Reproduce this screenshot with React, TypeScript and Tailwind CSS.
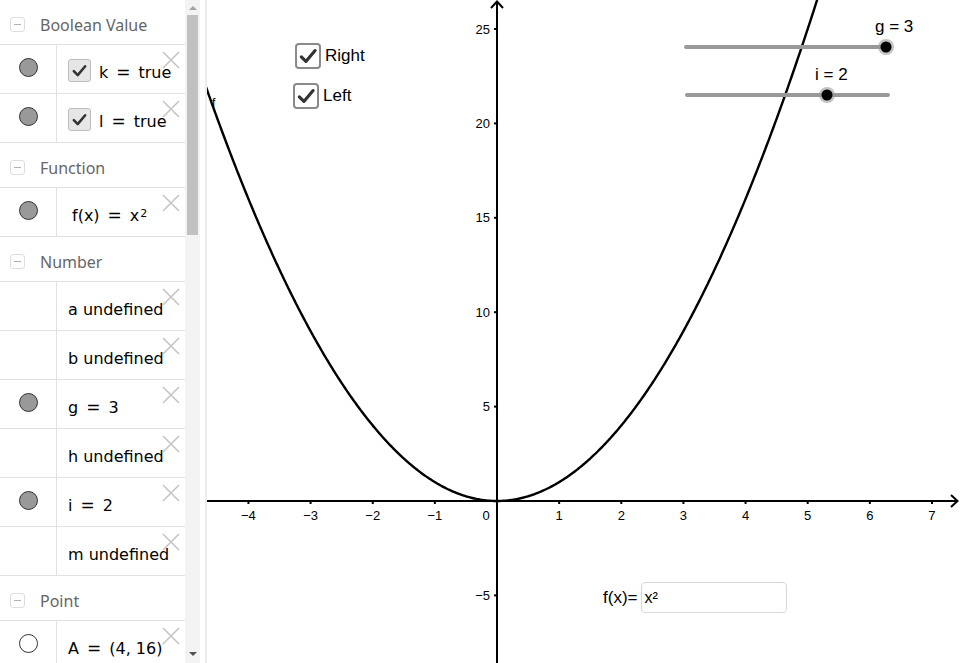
import React from "react";

const OX = 497;
const OY = 501;
const SX = 62.14;
const SY = 18.88;

function buildCurve() {
  const parts: string[] = [];
  for (let i = 0; i <= 600; i++) {
    const x = -4.72 + (i * (5.25 + 4.72)) / 600;
    const px = OX + x * SX;
    const py = OY - x * x * SY;
    parts.push(`${i === 0 ? "M" : "L"}${px.toFixed(2)} ${py.toFixed(2)}`);
  }
  return parts.join(" ");
}
const curve = buildCurve();

function Minus() {
  return (
    <div className="w-[15px] h-[15px] rounded-[3px] border border-[#dedede] flex items-center justify-center shrink-0">
      <div className="w-[7px] h-px bg-[#b0b0b0]" />
    </div>
  );
}

function Header({ title }: { title: string }) {
  return (
    <div className="h-[45px] flex items-center pl-[10px] pt-[5px] border-b border-[#e2e2e2] shrink-0">
      <Minus />
      <span className="ml-[15px] text-[16px] text-[#666] font-['Noto_Sans',sans-serif]">{title}</span>
    </div>
  );
}

function XIcon() {
  return (
    <svg width="18" height="18" viewBox="0 0 18 18" className="absolute right-[5px] top-[6px]">
      <path d="M1 1 L17 17 M17 1 L1 17" stroke="#c4c4c4" strokeWidth="1.6" fill="none" />
    </svg>
  );
}

function Marble({ filled = true }: { filled?: boolean }) {
  return (
    <div
      className={`w-[19px] h-[19px] rounded-full border border-[#333] ${filled ? "bg-[#999]" : "bg-white"}`}
    />
  );
}

function Row({
  marble,
  children,
}: {
  marble?: "filled" | "empty";
  children: React.ReactNode;
}) {
  return (
    <div className="h-[49px] flex border-b border-[#e2e2e2] shrink-0">
      <div className="w-[57px] border-r border-[#e2e2e2] flex items-center justify-center pb-[3px]">
        {marble === "filled" && <Marble />}
        {marble === "empty" && <Marble filled={false} />}
      </div>
      <div className="relative flex-1 flex items-center pl-[11px] pt-[8px] overflow-hidden whitespace-nowrap text-[16px] text-black font-['DejaVu_Sans',sans-serif]">
        {children}
        <XIcon />
      </div>
    </div>
  );
}

function Eq({ l, r }: { l: React.ReactNode; r: React.ReactNode }) {
  return (
    <span className="flex items-baseline">
      <span>{l}</span>
      <span className="px-[8px] text-[17px]">=</span>
      <span>{r}</span>
    </span>
  );
}

function PanelCheck() {
  return (
    <div className="w-[23px] h-[23px] rounded-[3px] bg-[#e6e6e6] border border-[#bdbdbd] flex items-center justify-center mr-[8px] -mt-[6px] shrink-0">
      <svg width="17" height="17" viewBox="0 0 24 24">
        <path d="M4 13 L9.5 18.5 L20 6" stroke="#333" strokeWidth="3.6" fill="none" strokeLinecap="round" strokeLinejoin="round" />
      </svg>
    </div>
  );
}

function CanvasCheck({ label, left, top }: { label: string; left: number; top: number }) {
  return (
    <div className="absolute flex items-center" style={{ left, top }}>
      <div className="w-[26px] h-[26px] rounded-[4px] border-2 border-[#8a8a8a] bg-white flex items-center justify-center">
        <svg width="20" height="20" viewBox="0 0 24 24">
          <path d="M4 13 L9.5 18.5 L20.5 5.5" stroke="#333" strokeWidth="3.8" fill="none" strokeLinecap="round" strokeLinejoin="round" />
        </svg>
      </div>
      <span className="ml-[4px] text-[17px] text-black font-['Liberation_Sans',Arial,sans-serif]">{label}</span>
    </div>
  );
}

const xLabels = [-4, -3, -2, -1, 1, 2, 3, 4, 5, 6, 7];
const yLabels = [25, 20, 15, 10, 5, -5];

export default function App() {
  return (
    <div className="w-[961px] h-[663px] flex bg-white overflow-hidden font-['DejaVu_Sans',sans-serif]">
      {/* Algebra panel */}
      <div className="w-[185px] h-full flex flex-col overflow-hidden">
        <Header title="Boolean Value" />
        <Row marble="filled">
          <PanelCheck />
          <Eq l="k" r="true" />
        </Row>
        <Row marble="filled">
          <PanelCheck />
          <Eq l="l" r="true" />
        </Row>
        <Header title="Function" />
        <Row marble="filled">
          <span className="ml-[4px]">
            <Eq
              l="f(x)"
              r={
                <span>
                  x<sup className="text-[11px] relative -top-[4px] ml-[1px]">2</sup>
                </span>
              }
            />
          </span>
        </Row>
        <Header title="Number" />
        <Row>a undefined</Row>
        <Row>b undefined</Row>
        <Row marble="filled">
          <Eq l="g" r="3" />
        </Row>
        <Row>h undefined</Row>
        <Row marble="filled">
          <Eq l="i" r="2" />
        </Row>
        <Row>m undefined</Row>
        <Header title="Point" />
        <Row marble="empty">
          <Eq l="A" r="(4, 16)" />
        </Row>
      </div>

      {/* Scrollbar */}
      <div className="w-[15px] h-full bg-[#f3f3f3] flex flex-col items-center relative">
        <div className="h-[15px] w-full flex items-center justify-center">
          <div className="w-0 h-0 border-l-[4px] border-r-[4px] border-b-[4px] border-l-transparent border-r-transparent border-b-[#a3a3a3]" />
        </div>
        <div className="w-[11px] h-[220px] bg-[#c1c1c1]" />
        <div className="flex-1" />
        <div className="h-[18px] w-full flex items-center justify-center">
          <div className="w-0 h-0 border-l-[4px] border-r-[4px] border-t-[4px] border-l-transparent border-r-transparent border-t-[#505050]" />
        </div>
      </div>

      {/* Divider */}
      <div className="w-[7px] h-full bg-white border-r-2 border-[#ececec]" />

      {/* Graphics view */}
      <div className="relative flex-1 h-full overflow-hidden">
        <svg width="754" height="663" viewBox="207 0 754 663" className="absolute left-0 top-0">
          {/* axes */}
          <line x1="207" y1={OY} x2="957" y2={OY} stroke="#000" strokeWidth="2" />
          <path d="M951 495 L957.5 501 L951 507" stroke="#000" strokeWidth="2" fill="none" />
          <line x1={OX} y1="663" x2={OX} y2="2" stroke="#000" strokeWidth="2" />
          <path d="M491 8 L497 1.5 L503 8" stroke="#000" strokeWidth="2" fill="none" />
          {/* ticks */}
          {xLabels.map((v) => (
            <line key={`xt${v}`} x1={OX + v * SX} y1={OY} x2={OX + v * SX} y2={OY + 3} stroke="#000" strokeWidth="2" />
          ))}
          {yLabels.map((v) => (
            <line key={`yt${v}`} x1={OX - 3} y1={OY - v * SY} x2={OX} y2={OY - v * SY} stroke="#000" strokeWidth="2" />
          ))}
          {/* labels */}
          <g fontFamily="'Liberation Sans', Arial, sans-serif" fontSize="13" fill="#000">
            {xLabels.map((v) => (
              <text key={`xl${v}`} x={OX + v * SX} y={OY + 19} textAnchor="middle">
                {v < 0 ? `\u2212${-v}` : `${v}`}
              </text>
            ))}
            <text x={486} y={OY + 19} textAnchor="middle">0</text>
            {yLabels.map((v) => (
              <text key={`yl${v}`} x={490} y={OY - v * SY + 4.5} textAnchor="end">
                {v < 0 ? `\u2212${-v}` : `${v}`}
              </text>
            ))}
            <text x={212} y={107} fontSize="12">f</text>
          </g>
          {/* curve */}
          <path d={curve} stroke="#000" strokeWidth="2.4" fill="none" />
          {/* sliders */}
          <line x1="686" y1="47" x2="886" y2="47" stroke="#999" strokeWidth="4" strokeLinecap="round" />
          <circle cx="886" cy="47" r="8" fill="#999" fillOpacity="0.6" />
          <circle cx="886" cy="47" r="5.5" fill="#000" />
          <line x1="687" y1="95" x2="888" y2="95" stroke="#999" strokeWidth="4" strokeLinecap="round" />
          <circle cx="827" cy="95" r="8" fill="#999" fillOpacity="0.6" />
          <circle cx="827" cy="95" r="5.5" fill="#000" />
          <g fontFamily="'Liberation Sans', Arial, sans-serif" fontSize="17" fill="#000">
            <text x="875" y="32">g = 3</text>
            <text x="815" y="80">i = 2</text>
          </g>
        </svg>

        <CanvasCheck label="Right" left={295 - 207} top={43} />
        <CanvasCheck label="Left" left={293 - 207} top={83} />

        {/* input box */}
        <div className="absolute flex items-center" style={{ left: 603 - 207, top: 582 }}>
          <span className="text-[17px] text-black font-['Liberation_Sans',Arial,sans-serif] mr-[4px]">f(x)=</span>
          <div className="w-[146px] h-[31px] rounded-[4px] border border-[#d9d9d9] flex items-center pl-[2px] text-[16px] text-black font-['Liberation_Sans',Arial,sans-serif]">
            x²
          </div>
        </div>
      </div>
    </div>
  );
}
